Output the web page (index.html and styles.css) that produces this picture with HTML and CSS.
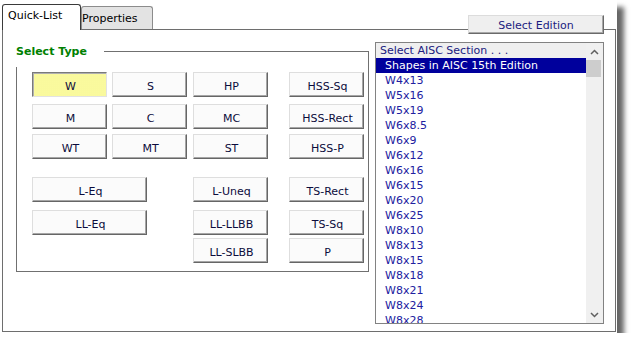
FILE: index.html
```html
<!DOCTYPE html>
<html>
<head>
<meta charset="utf-8">
<link rel="stylesheet" href="styles.css">
</head>
<body>
<div class="window">
  <div class="tabstrip">
    <div class="tab active">Quick-List</div>
    <div class="tab inactive">Properties</div>
  </div>
  <button class="edition">Select Edition</button>
  <div class="panel">
    <div class="group">
      <div class="group-label">Select Type</div>
      <div class="grid">
        <button class="btn pressed">W</button>
        <button class="btn">S</button>
        <button class="btn">HP</button>
        <button class="btn">HSS-Sq</button>
        <button class="btn">M</button>
        <button class="btn">C</button>
        <button class="btn">MC</button>
        <button class="btn">HSS-Rect</button>
        <button class="btn">WT</button>
        <button class="btn">MT</button>
        <button class="btn">ST</button>
        <button class="btn">HSS-P</button>
        <button class="btn wide r4">L-Eq</button>
        <button class="btn c3 r4">L-Uneq</button>
        <button class="btn c4 r4">TS-Rect</button>
        <button class="btn wide r5">LL-Eq</button>
        <button class="btn c3 r5">LL-LLBB</button>
        <button class="btn c4 r5">TS-Sq</button>
        <button class="btn c3 r6">LL-SLBB</button>
        <button class="btn c4 r6">P</button>
      </div>
    </div>
    <div class="listbox">
      <div class="rows">
        <div class="row head">Select AISC Section . . .</div>
        <div class="row sel">Shapes in AISC 15th Edition</div>
        <div class="row">W4x13</div>
        <div class="row">W5x16</div>
        <div class="row">W5x19</div>
        <div class="row">W6x8.5</div>
        <div class="row">W6x9</div>
        <div class="row">W6x12</div>
        <div class="row">W6x16</div>
        <div class="row">W6x15</div>
        <div class="row">W6x20</div>
        <div class="row">W6x25</div>
        <div class="row">W8x10</div>
        <div class="row">W8x13</div>
        <div class="row">W8x15</div>
        <div class="row">W8x18</div>
        <div class="row">W8x21</div>
        <div class="row">W8x24</div>
        <div class="row">W8x28</div>
      </div>
      <div class="scroll">
        <div class="arrow"><svg width="9" height="6" viewBox="0 0 9 6"><path d="M1 5 L4.5 1.5 L8 5" fill="none" stroke="#606060" stroke-width="1.5"/></svg></div>
        <div class="thumb"></div>
        <div class="track"></div>
        <div class="arrow"><svg width="9" height="6" viewBox="0 0 9 6"><path d="M1 1 L4.5 4.5 L8 1" fill="none" stroke="#606060" stroke-width="1.5"/></svg></div>
      </div>
    </div>
  </div>
</div>
</body>
</html>
```
FILE: styles.css
```css
body {
  margin: 0;
  background: #fff;
  font-family: "DejaVu Sans", Tahoma, sans-serif;
  font-size: 11px;
}

.window {
  position: relative;
  width: 617px;
  height: 333px;
  background: #fff;
  box-shadow: 7px 7px 5px rgba(0, 0, 0, 0.6);
}

.tabstrip {
  position: relative;
  z-index: 1;
  display: flex;
  align-items: flex-end;
  height: 29px;
  padding-left: 2px;
  box-sizing: border-box;
}

.tab {
  box-sizing: border-box;
  border-radius: 3px 3px 0 0;
  line-height: 13px;
  white-space: nowrap;
}

.tab.active {
  width: 79px;
  height: 26px;
  margin-bottom: -1px;
  border: 1px solid #3a3a3a;
  border-bottom: none;
  background: #fff;
  padding: 4px 0 0 5px;
  color: #000;
}

.tab.inactive {
  width: 72px;
  height: 23px;
  border: 1px solid #8c8c8c;
  border-bottom: none;
  background: #e3e3e3;
  padding: 5px 0 0 0;
  color: #000;
}

.edition {
  position: absolute;
  z-index: 2;
  left: 468px;
  top: 15px;
  width: 136px;
  height: 19px;
  margin: 0;
  padding: 1px 0 0 0;
  box-sizing: border-box;
  font: inherit;
  line-height: 15px;
  color: #1c1c80;
  background: #efefef;
  border: 1px solid;
  border-color: #dcdcdc #6a6a6a #6a6a6a #dcdcdc;
  box-shadow: inset -1px -1px 0 #a8a8a8;
}

.panel {
  margin-left: 2px;
  width: 614px;
  height: 303px;
  box-sizing: border-box;
  border: 1px solid #6e6e6e;
  display: flex;
  align-items: flex-start;
  padding: 12px 0 0 13px;
  background: #fff;
}

.group {
  position: relative;
  width: 353px;
  height: 221px;
  margin-top: 9px;
  box-sizing: border-box;
  border: 1px solid #707070;
  padding: 20px 0 0 15px;
}

.group-label {
  position: absolute;
  left: -3px;
  top: -13px;
  width: 90px;
  height: 28px;
  box-sizing: border-box;
  padding: 6px 0 0 2px;
  background: #fff;
  color: #008000;
  font-weight: bold;
  line-height: 13px;
}

.grid {
  display: grid;
  grid-template-columns: 80px 81px 96px 75px;
  grid-template-rows: 32px 30px 43px 33px 28px 25px;
}

.btn {
  justify-self: start;
  align-self: start;
  width: 75px;
  height: 25px;
  margin: 0;
  padding: 3px 0 0 2px;
  box-sizing: border-box;
  font: inherit;
  font-size: 11px;
  line-height: 15px;
  color: #0c0c3c;
  background: #fbfbfb;
  border: 1px solid;
  border-color: #dedede #666 #666 #dedede;
  box-shadow: inset -1px -1px 0 #a6a6a6;
}

.btn.pressed {
  background-color: #ffff9a;
  background-image: radial-gradient(circle, #f2f2a0 0.6px, transparent 0.8px);
  background-size: 2px 2px;
  border-color: #7a7a7a #e2e2e2 #e2e2e2 #7a7a7a;
  box-shadow: inset 1px 1px 0 #b0b0b0;
}

.btn.wide {
  grid-column: 1 / span 2;
  width: 115px;
}

.c3 { grid-column: 3; }
.c4 { grid-column: 4; }
.r4 { grid-row: 4; }
.r5 { grid-row: 5; }
.r6 { grid-row: 6; }

.listbox {
  margin-left: 6px;
  width: 229px;
  height: 282px;
  box-sizing: border-box;
  border: 1px solid #828282;
  display: flex;
  background: #fff;
}

.rows {
  flex: 1;
  overflow: hidden;
}

.row {
  height: 15px;
  line-height: 15px;
  padding-left: 9px;
  color: #2020a0;
  white-space: nowrap;
}

.row.head {
  background: #efefef;
  color: #202080;
  padding-left: 4px;
}

.row.sel {
  background: #00009c;
  color: #fff;
}

.scroll {
  width: 17px;
  background: #f0f0f0;
  display: flex;
  flex-direction: column;
}

.arrow {
  height: 17px;
  display: flex;
  align-items: center;
  justify-content: center;
}

.thumb {
  height: 17px;
  margin-right: 2px;
  background: #cdcdcd;
}

.track {
  flex: 1;
}
```
